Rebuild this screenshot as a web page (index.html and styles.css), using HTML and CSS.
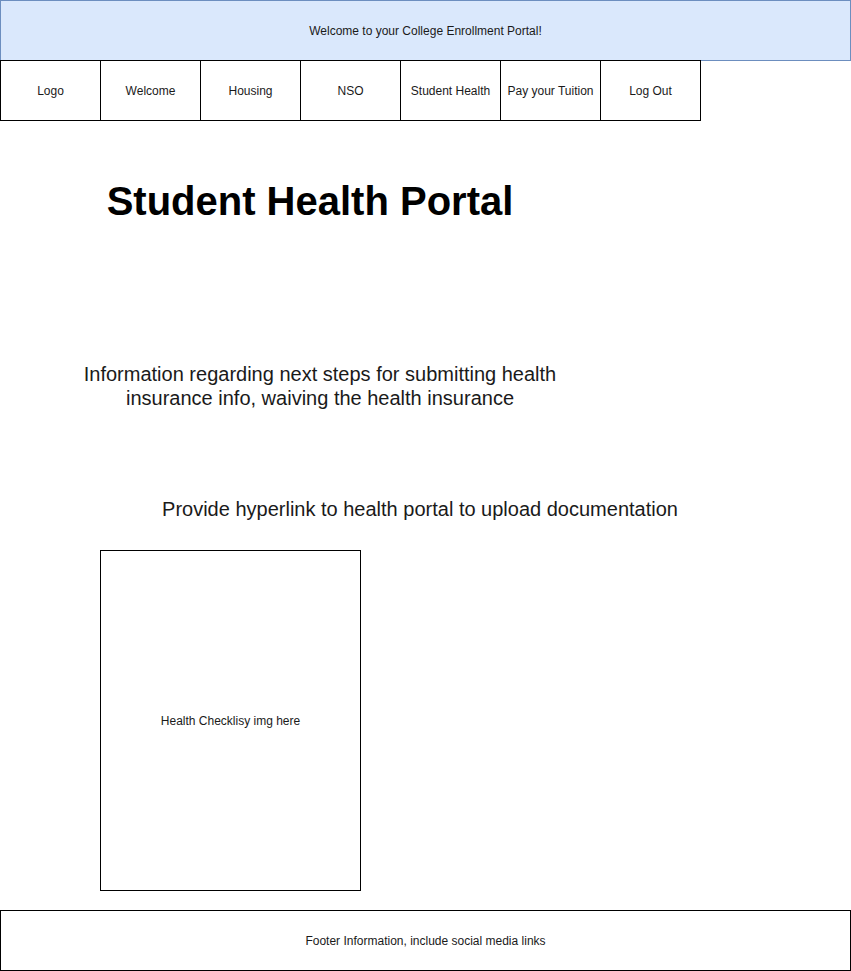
FILE: index.html
```html
<!DOCTYPE html>
<html lang="en">
<head>
<meta charset="utf-8">
<title>Student Health Portal</title>
<link rel="stylesheet" href="styles.css">
</head>
<body>
  <header class="banner">Welcome to your College Enrollment Portal!</header>
  <nav class="nav">
    <div class="nav-item">Logo</div>
    <div class="nav-item">Welcome</div>
    <div class="nav-item">Housing</div>
    <div class="nav-item">NSO</div>
    <div class="nav-item">Student Health</div>
    <div class="nav-item">Pay your Tuition</div>
    <div class="nav-item">Log Out</div>
  </nav>
  <main class="main">
    <h1 class="title">Student Health Portal</h1>
    <p class="info">Information regarding next steps for submitting health insurance info, waiving the health insurance</p>
    <p class="link-note">Provide hyperlink to health portal to upload documentation</p>
    <div class="img-box">Health Checklisy img here</div>
  </main>
  <footer class="footer">Footer Information, include social media links</footer>
</body>
</html>
```
FILE: styles.css
```css
* { box-sizing: border-box; }
html, body { margin: 0; padding: 0; }
body {
  width: 851px;
  height: 971px;
  overflow: hidden;
  background: #fff;
  font-family: "Liberation Sans", Arial, Helvetica, sans-serif;
  color: #1a1a1a;
}
.banner {
  width: 851px;
  height: 61px;
  background: #dae8fc;
  border: 1px solid #6c8ebf;
  display: flex;
  align-items: center;
  justify-content: center;
  font-size: 12px;
}
.nav {
  display: flex;
  margin-top: -1px;
  position: relative;
}
.nav-item {
  width: 101px;
  height: 61px;
  border: 1px solid #000;
  background: #fff;
  display: flex;
  align-items: center;
  justify-content: center;
  font-size: 12px;
  white-space: nowrap;
}
.nav-item + .nav-item { margin-left: -1px; }
.main { display: flex; flex-direction: column; }
.title {
  margin: 56px 0 0 0;
  width: 620px;
  text-align: center;
  font-size: 40px;
  line-height: 48px;
  font-weight: bold;
  color: #000;
}
.info {
  margin: 137px 0 0 75px;
  width: 490px;
  text-align: center;
  font-size: 20px;
  line-height: 24px;
}
.link-note {
  margin: 87px 0 0 0;
  width: 840px;
  text-align: center;
  font-size: 20px;
  line-height: 24px;
}
.img-box {
  margin: 29px 0 0 100px;
  width: 261px;
  height: 341px;
  border: 1px solid #000;
  display: flex;
  align-items: center;
  justify-content: center;
  font-size: 12px;
}
.footer {
  margin-top: 19px;
  width: 851px;
  height: 61px;
  border: 1px solid #000;
  display: flex;
  align-items: center;
  justify-content: center;
  font-size: 12px;
}
```
